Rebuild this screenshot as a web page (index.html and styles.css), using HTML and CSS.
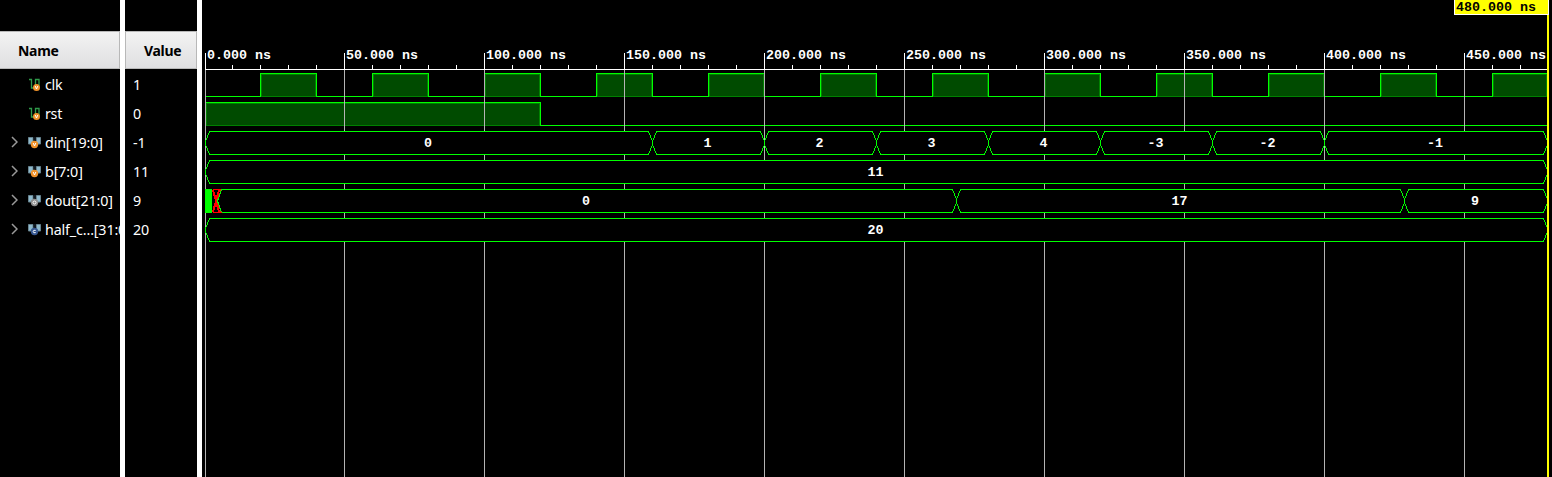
FILE: index.html
```html
<!DOCTYPE html>
<html lang="en">
<head>
<meta charset="utf-8">
<title>Waveform</title>
<link rel="stylesheet" href="styles.css">
</head>
<body>
<svg class="defs" width="0" height="0">
  <defs>
    <symbol id="bit" viewBox="0 0 12 14">
      <path d="M0 1.500h2.500v8.500h3M6.500 8v-6.500h3.500v6" fill="none" stroke="#2f9a4a" stroke-width="1.300"/>
      <circle cx="7.500" cy="9.500" r="3.500" fill="#f0922a"/><path d="M6.200 8l1.300 3 1.300-3" fill="none" stroke="#fff"/>
    </symbol>
    <symbol id="bus" viewBox="0 0 14 14">
      <path d="M.5 1.500h4.500v3l2 2.500 1.500-2.500v-3h4v6.500h-2l-4 2-4-2h-2z" fill="#8fb9cc" stroke="#66828e"/>
      <path d="M5.500 1h2.500v3l-1.200 1.500-1.300-1.500z" fill="#101820"/>
    </symbol>
    <symbol id="chev" viewBox="0 0 7 12"><path d="M1 1l5 5-5 5" fill="none" stroke="#999" stroke-width="1.500"/></symbol>
  </defs>
</svg>
<div class="viewer">
  <section class="names">
    <div class="head">Name</div>
    <div class="row"><svg class="bit"><use href="#bit"/></svg><span>clk</span></div>
    <div class="row"><svg class="bit"><use href="#bit"/></svg><span>rst</span></div>
    <div class="row"><svg class="chev"><use href="#chev"/></svg><svg class="bus"><use href="#bus"/><circle cx="6.500" cy="8.500" r="3.700" fill="#f0922a"/><path d="M5.200 7l1.300 3 1.300-3" class="mark"/></svg><span class="din">din[19:0]</span></div>
    <div class="row"><svg class="chev"><use href="#chev"/></svg><svg class="bus"><use href="#bus"/><circle cx="6.500" cy="8.500" r="3.700" fill="#f0922a"/><path d="M5.200 7l1.300 3 1.300-3" class="mark"/></svg><span class="b">b[7:0]</span></div>
    <div class="row"><svg class="chev"><use href="#chev"/></svg><svg class="bus"><use href="#bus"/><circle cx="6.500" cy="8.500" r="3.700" fill="#8c8c8c"/><circle cx="6.500" cy="8.500" r="1.500" class="mark"/></svg><span class="dout">dout[21:0]</span></div>
    <div class="row"><svg class="chev"><use href="#chev"/></svg><svg class="bus"><use href="#bus"/><circle cx="6.500" cy="8.500" r="3.700" fill="#35568f"/><path d="M7.700 7.400q-2.500-.8-2.500 1.100t2.500 1.100" class="mark"/></svg><span class="half">half_c...[31:0]</span></div>
  </section>
  <section class="values">
    <div class="head">Value</div>
    <div class="row">1</div><div class="row">0</div><div class="row">-1</div><div class="row">11</div><div class="row">9</div><div class="row">20</div>
  </section>
  <svg class="wave" id="wave" width="1350" height="477" viewBox="202 0 1350 477"></svg>
</div>
<script src="wave.js"></script>
</body>
</html>
```

FILE: styles.css
```css
body { margin: 0; background: #000; overflow: hidden; }
.defs { position: absolute; }
.viewer { display: flex; width: 1552px; height: 477px; font: 14.3px "Noto Sans", sans-serif; color: #fff; }
.names, .values { box-sizing: border-box; padding-top: 31px; overflow: hidden; flex: none; }
.names { width: 125px; border-right: 5px solid #fff; }
.values { width: 77px; border-right: 5px solid #fff; }
.head { box-sizing: border-box; height: 38px; padding-left: 18px; line-height: 37px; font-size: 14px; font-weight: 700; letter-spacing: -.3px; color: #000; background: linear-gradient(#f3f3f3, #dfdfe1); border: 1px solid #b8b8b8; border-left: 0; margin-bottom: 1px; }
.values .head { border-left: 1px solid #b8b8b8; }
.row { height: 29px; line-height: 28px; display: flex; align-items: center; white-space: nowrap; }
.row span { margin-left: 4px; letter-spacing: -.3px; }
.row .din { letter-spacing: -.15px; }
.row .b { letter-spacing: -.1px; }
.row .dout { letter-spacing: -.15px; }
.row .half { letter-spacing: -.15px; }
.values .row { padding-left: 8px; letter-spacing: -.2px; }
.bit { width: 12px; height: 14px; margin-left: 29px; flex: none; }
.chev { width: 7px; height: 12px; margin-left: 11px; margin-top: -2px; flex: none; }
.bus { width: 14px; height: 14px; margin-left: 10px; flex: none; }
.row .bus + span { margin-left: 3px; }
.mark { fill: none; stroke: #fff; stroke-width: 1px; }
.wave { display: block; flex: none; }
.wave text { font: bold 13.33px "Liberation Mono", monospace; fill: #fff; white-space: pre; }
.wave .cursor-label { fill: #000; }
.line { fill: none; stroke: #0f0; }
.bus-shape { fill: #000; stroke: #0f0; }
```

FILE: wave.js
```javascript
const svg = document.getElementById('wave');
const parts = [];
const rect = (x, y, w, h, fill) => parts.push(`<rect x="${x}" y="${y}" width="${w}" height="${h}" fill="${fill}" shape-rendering="crispEdges"/>`);
const text = (x, y, value, extra = '') => parts.push(`<text x="${x}" y="${y}" ${extra}>${value}</text>`);
const END = 1547;

function high(x1, x2, y) {
  rect(x1, y, x2 - x1 + 1, 24, '#008000');
  rect(x1 + 2, y + 2, x2 - x1 - 3, 21, '#004b00');
  rect(x1, y, x2 - x1 + 1, 1, '#0f0');
}

// Logic levels
rect(205, 96, END - 205, 1, '#0f0');
for (let x = 260; x < END; x += 112) {
  const stop = Math.min(x + 56, END);
  high(x, stop, 73);
  rect(x, 73, 1, 24, '#0f0');
  if (stop < END) rect(stop, 73, 1, 24, '#0f0');
}
high(205, 540, 102);
rect(540, 102, 1, 24, '#0f0');
rect(540, 125, END - 540, 1, '#0f0');

// Grid and ruler
rect(205, 69, END - 205, 1, '#fff');
for (let i = 0; i <= 47; i++) {
  const x = i ? 204 + i * 28 : 205;
  if (i % 5 === 0) {
    rect(x, 70, 1, 407, '#b4b4b4');
    rect(x, 53, 1, 17, '#fff');
    text(x + 2, 59, `${i * 10}.000 ns`);
  } else rect(x, 65, 1, 4, '#fff');
}

// Bus segments
function bus(y, edges, labels) {
  labels.forEach((label, i) => {
    const a = edges[i] + .5, b = edges[i + 1] + .5, t = y + .5;
    parts.push(`<path class="bus-shape" shape-rendering="crispEdges" d="M${a} ${t + 13}V${t + 10}L${a + 4} ${t}H${b - 4}L${b} ${t + 10}V${t + 13}L${b - 4} ${t + 23}H${a + 4}Z"/>`);
    text((a + b) / 2 - 1, y + 16, label, 'text-anchor="middle"');
  });
}
bus(131, [205, 652, 764, 876, 988, 1100, 1212, 1324, END], ['0', '1', '2', '3', '4', '-3', '-2', '-1']);
bus(160, [205, END], ['11']);
bus(189, [217, 956, 1404, END], ['0', '17', '9']);
bus(218, [205, END], ['20']);
rect(205, 189, 7, 24, '#0f0');
parts.push('<path shape-rendering="crispEdges" fill="#000" stroke="red" d="M212.500 189.500H221L217.500 201L221 212.500H212.500"/><path fill="none" stroke="red" stroke-width="2" shape-rendering="crispEdges" d="M213 190L219 212M219 190L213 212"/><path class="line" shape-rendering="crispEdges" d="M221.500 189.500L217.500 201L221.500 212.500"/>');

// Time cursor
rect(END, 0, 2, 477, '#ff0');
rect(1454, 0, 95, 15, '#fff');
rect(1455, 0, 93, 14, '#ff0');
text(1456, 11, '480.000 ns', 'class="cursor-label"');
svg.innerHTML = parts.join('');
```
